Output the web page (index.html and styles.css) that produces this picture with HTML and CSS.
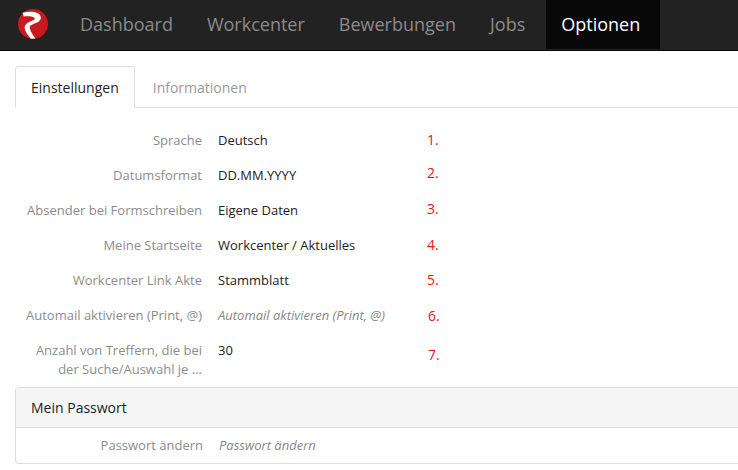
FILE: index.html
```html
<!DOCTYPE html>
<html lang="de">
<head>
<meta charset="utf-8">
<title>Optionen</title>
<link rel="stylesheet" href="styles.css">
</head>
<body>
<header class="navbar">
  <a class="logo" href="#">
    <svg width="30" height="30" viewBox="0 0 30 30">
      <circle cx="15" cy="15" r="15" fill="#c8191c"/>
      <path d="M4.5 3.8 C9 2.6 13 2.4 17 3.2 C21 4 23.2 6.5 22.8 9.5 C22.3 12.2 19.5 13.6 16 14.8 C12.8 16 11.5 17 11.8 19 C12.4 22.5 15 26 17.5 29.6 L13 29.8 C10 26.5 7 22.5 6.7 19 C6.5 15.5 9.5 13.6 13 12.2 C15.5 11.2 17 10.6 16.8 9.6 C16.5 8 11.5 7 5.8 7.5 Z" fill="#fff"/>
    </svg>
  </a>
  <nav class="nav">
    <a class="nav-item" href="#">Dashboard</a>
    <a class="nav-item" href="#">Workcenter</a>
    <a class="nav-item" href="#">Bewerbungen</a>
    <a class="nav-item" href="#">Jobs</a>
    <a class="nav-item active" href="#">Optionen</a>
  </nav>
</header>
<main class="content">
  <div class="tabs">
    <a class="tab active" href="#">Einstellungen</a>
    <a class="tab" href="#">Informationen</a>
  </div>
  <div class="form">
    <div class="row"><div class="label">Sprache</div><div class="value">Deutsch</div></div>
    <div class="row"><div class="label">Datumsformat</div><div class="value">DD.MM.YYYY</div></div>
    <div class="row"><div class="label">Absender bei Formschreiben</div><div class="value">Eigene Daten</div></div>
    <div class="row"><div class="label">Meine Startseite</div><div class="value">Workcenter / Aktuelles</div></div>
    <div class="row"><div class="label">Workcenter Link Akte</div><div class="value">Stammblatt</div></div>
    <div class="row"><div class="label">Automail aktivieren (Print, @)</div><div class="value muted">Automail aktivieren (Print, @)</div></div>
    <div class="row tall"><div class="label">Anzahl von Treffern, die bei der Suche/Auswahl je ...</div><div class="value">30</div></div>
  </div>
  <section class="panel">
    <div class="panel-head">Mein Passwort</div>
    <div class="panel-body">
      <div class="label">Passwort ändern</div><div class="value muted">Passwort ändern</div>
    </div>
  </section>
</main>
<span class="mark m1">1.</span>
<span class="mark m2">2.</span>
<span class="mark m3">3.</span>
<span class="mark m4">4.</span>
<span class="mark m5">5.</span>
<span class="mark m6">6.</span>
<span class="mark m7">7.</span>
</body>
</html>
```

FILE: styles.css
```css
* { box-sizing: border-box; }
html, body { margin: 0; padding: 0; }
body {
  width: 738px;
  height: 470px;
  overflow: hidden;
  position: relative;
  background: #fff;
  font-family: "Open Sans", sans-serif;
  font-size: 13px;
  line-height: 19px;
  color: #1a1a1a;
}
a { text-decoration: none; color: inherit; }
.navbar {
  display: flex;
  height: 51px;
  background: #222;
  border-bottom: 1px solid #080808;
}
.logo { display: block; width: 50px; padding: 9px 0 0 18px; flex: none; }
.logo svg { display: block; }
.nav { display: flex; gap: 4px; padding-left: 15px; }
.nav-item {
  display: block;
  height: 49px;
  padding: 0 15px;
  font-size: 18px;
  line-height: 49px;
  color: #8b8b8b;
}
.nav-item.active { margin-left: 2px; padding-right: 20px; background: #080808; color: #fff; }
.content { padding: 15px 0 0 15px; }
.tabs {
  display: flex;
  height: 42px;
  border-bottom: 1px solid #ddd;
}
.tab {
  display: block;
  height: 42px;
  padding: 11px 15px 0;
  margin-right: 2px;
  font-size: 14px;
  line-height: 20px;
  color: #999;
  border: 1px solid transparent;
  border-radius: 4px 4px 0 0;
}
.tab.active {
  color: #222;
  background: #fff;
  border-color: #ddd #ddd #fff;
}
.form { padding-top: 15px; }
.row { display: flex; height: 35px; padding-top: 8px; }
.row.tall { height: 54px; }
.label {
  width: 187px;
  flex: none;
  text-align: right;
  color: #8c8c8c;
}
.value { margin-left: 16px; color: #222; }
.muted { font-style: italic; color: #888; }
.panel {
  height: 77px;
  border: 1px solid #ddd;
  border-right: none;
  border-radius: 4px 0 0 4px;
}
.panel-head {
  height: 40px;
  padding: 10px 15px 0;
  font-size: 14px;
  line-height: 20px;
  color: #222;
  background: #f5f5f5;
  border-bottom: 1px solid #ddd;
}
.panel-body { display: flex; padding-top: 8px; }
.mark {
  position: absolute;
  left: 427px;
  font-size: 14px;
  line-height: 16px;
  color: #f01010;
}
.m1 { top: 132px; }
.m2 { top: 165px; }
.m3 { top: 201px; }
.m4 { top: 237px; }
.m5 { top: 272px; }
.m6 { top: 308px; left: 428px; }
.m7 { top: 347px; left: 428px; }
```
